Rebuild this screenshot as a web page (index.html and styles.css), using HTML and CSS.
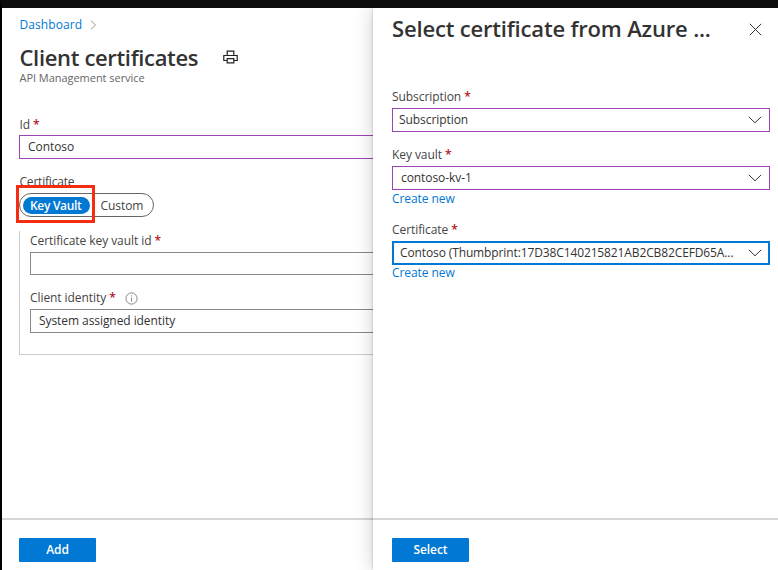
FILE: index.html
```
<!DOCTYPE html>
<html lang="en">
<head>
<meta charset="utf-8">
<title>Client certificates</title>
<link rel="stylesheet" href="styles.css">
</head>
<body>
<div class="app">
  <main class="page">
    <div class="content">
      <nav class="breadcrumb"><a>Dashboard</a><svg width="7" height="10" viewBox="0 0 7 10"><path d="M1 .7 5.500 5 1 9.300"/></svg></nav>
      <div class="heading">
        <h1>Client certificates</h1>
        <svg class="print" width="15" height="14" viewBox="0 0 15 14"><path d="M4.200 5.500V1.200h6.600v4.300M4 10.500H.8v-5h13.400v5H11M4.200 8.600h6.600v4.200H4.200z"/></svg>
      </div>
      <p class="subtitle">API Management service</p>
      <label class="label id-label">Id <b>*</b></label>
      <div class="field edited id-field"><span>Contoso</span></div>
      <label class="label cert-label">Certificate</label>
      <div class="toggle">
        <span class="option selected">Key Vault</span><span class="option">Custom</span>
        <i class="highlight"></i>
      </div>
      <section class="group">
        <label class="label kv-label">Certificate key vault id <b>*</b></label>
        <div class="field"></div>
        <label class="label identity-label">Client identity <b>*</b><svg class="info" width="13" height="13" viewBox="0 0 13 13"><circle cx="6.500" cy="6.500" r="5.600"/><path d="M6.500 5.600v4M6.500 3.400v1.100"/></svg></label>
        <div class="field identity"><span>System assigned identity</span></div>
      </section>
    </div>
    <footer><button class="add">Add</button></footer>
  </main>
  <aside class="panel">
    <div class="content">
      <header><h2>Select certificate from Azure ...</h2><svg class="close" width="13" height="13" viewBox="0 0 13 13"><path d="m.8.8 11.400 11.400M12.200.8.8 12.200"/></svg></header>
      <label class="label">Subscription <b>*</b></label>
      <div class="field edited sub"><span>Subscription</span><svg class="chev" width="14" height="8" viewBox="0 0 14 8"><path d="m.8.8 6.200 6 6.200-6"/></svg></div>
      <label class="label vault-label">Key vault <b>*</b></label>
      <div class="field edited vault"><span>contoso-kv-1</span><svg class="chev" width="14" height="8" viewBox="0 0 14 8"><path d="m.8.8 6.200 6 6.200-6"/></svg></div>
      <a class="create">Create new</a>
      <label class="label cert2">Certificate <b>*</b></label>
      <div class="field focused"><span>Contoso (Thumbprint:17D38C140215821AB2CB82CEFD65A...</span><svg class="chev" width="14" height="8" viewBox="0 0 14 8"><path d="m.8.8 6.200 6 6.200-6"/></svg></div>
      <a class="create">Create new</a>
    </div>
    <footer><button>Select</button></footer>
  </aside>
</div>
</body>
</html>
```
FILE: styles.css
```
* { box-sizing: border-box; }
body {
  margin: 0;
  background: #fff;
  color: #333;
  font: 12px/16px "Open Sans", "Noto Sans", sans-serif;
  letter-spacing: -.07px;
}
.app {
  display: flex;
  width: 778px;
  height: 570px;
  overflow: hidden;
  border-top: 8px solid #0d0d0d;
  border-left: 2px solid #000;
}
.page, .panel { display: flex; flex-direction: column; background: #fff; }
.page { width: 371px; flex: none; }
.panel { width: 405px; flex: none; position: relative; box-shadow: -2px 0 16px rgba(0,0,0,.16), -1px 0 2px rgba(0,0,0,.1); }
.content { flex: 1; }
.page .content { padding: 9px 0 0 17px; }
.panel .content { padding: 4px 8px 0 19px; }
svg { fill: none; stroke: #333; flex: none; }
a { color: #0078d4; font-weight: 500; }
.breadcrumb { display: flex; align-items: center; gap: 8px; height: 16px; padding-left: .5px; letter-spacing: .08px; }
.breadcrumb svg { stroke: #999; }
.heading { display: flex; align-items: center; height: 24px; margin-top: 12px; padding-left: .5px; }
h1, h2 { margin: 0; font-size: 22px; line-height: 24px; font-weight: 620; white-space: nowrap; }
h1 { width: 203px; letter-spacing: -.34px; }
h2 { letter-spacing: -.17px; }
.print { stroke: #222; stroke-width: 1.2; }
.subtitle { margin: 2px 0 0 .5px; font-size: 11px; line-height: 14px; color: #666; letter-spacing: -.04px; }
.label { display: flex; align-items: center; height: 16px; white-space: pre; color: #444; }
.label b { color: #b3121d; font-weight: 600; }
.id-label { margin: 32px 0 2px .5px; }
.field { display: flex; align-items: center; height: 24px; border: 1px solid #8a8886; padding: 0 8px; white-space: nowrap; }
.page .field { border-right: 0; }
.edited { border-color: #9a45b3; }
.cert-label { margin: 15px 0 3px .5px; letter-spacing: -.2px; }
.toggle { position: relative; display: flex; align-items: center; width: 135px; height: 24px; padding-left: 3px; border: 1px solid #666; border-radius: 12px; }
.option { height: 17px; line-height: 17px; padding-left: 10.5px; color: #444; }
.selected { width: 67px; padding-left: 7px; border-radius: 9px; background: #0078d4; color: #fff; font-weight: 600; letter-spacing: -.3px; }
.highlight { position: absolute; left: -4px; top: -9px; width: 79px; height: 38px; border: 3px solid #f52c14; }
.group { height: 124px; margin-top: 14px; padding: 2px 0 0 10px; border: solid #ccc; border-width: 0 0 1px 1px; }
.kv-label { margin-bottom: 3px; }
.group .field { height: 23px; }
.identity-label { margin: 15px 0 3px; }
.group .identity { height: 24px; }
.info { margin-left: 9px; stroke: #888; }
.panel header { display: flex; justify-content: space-between; align-items: center; height: 32px; padding: 0 8px 0 0; }
.close { margin-top: 2px; }
.panel header + .label { margin: 45px 0 3px; }
.vault-label { margin: 15px 0 3px; }
.panel .field { justify-content: space-between; padding: 0 7px 0 6px; }
.panel .vault { padding-left: 8px; }
.panel .focused { border: 2px solid #0078d4; padding: 0 6px; letter-spacing: -.12px; }
.create { display: block; margin-top: 1px; }
.cert2 { margin: 15px 0 3px; }
.focused + .create { margin-top: 0; }
footer { height: 52px; border-top: 2px solid #d5d5d5; padding: 18px 0 0 17px; }
.panel footer { padding-left: 19px; }
button { display: block; width: 77px; height: 24px; padding: 0; border: 0; border-radius: 1px; background: #0078d4; color: #fff; font: 600 12px/24px "Open Sans", sans-serif; letter-spacing: -.1px; }
```
